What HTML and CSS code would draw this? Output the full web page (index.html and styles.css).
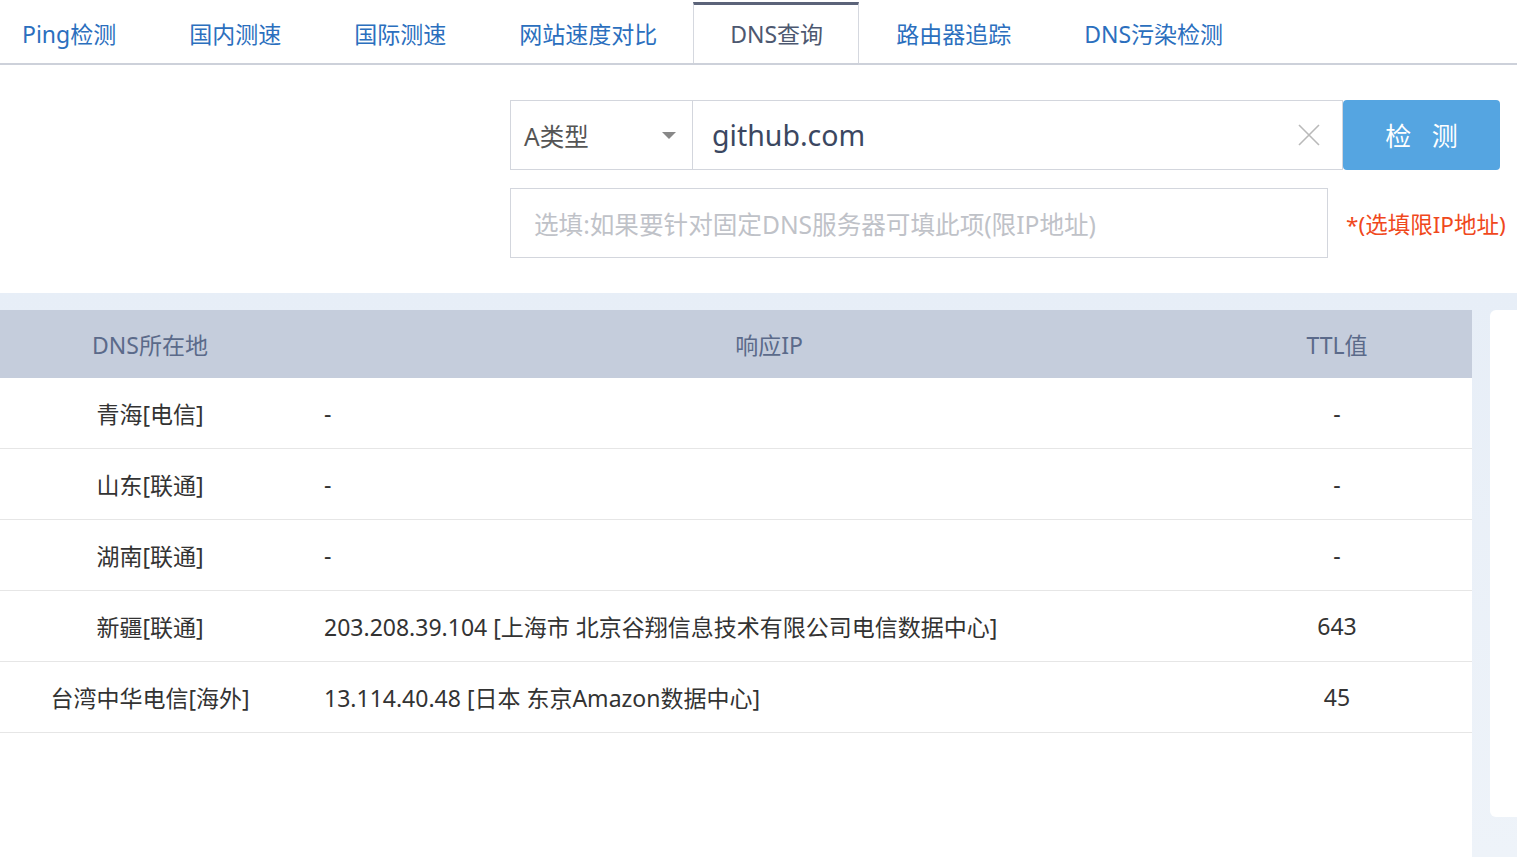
FILE: index.html
```html
<!DOCTYPE html>
<html lang="zh-CN">
<head>
<meta charset="utf-8">
<title>DNS查询</title>
<link rel="stylesheet" href="styles.css">
</head>
<body>
<nav class="tabs">
  <a class="tab first">Ping检测</a>
  <a class="tab">国内测速</a>
  <a class="tab">国际测速</a>
  <a class="tab">网站速度对比</a>
  <a class="tab active">DNS查询</a>
  <a class="tab">路由器追踪</a>
  <a class="tab">DNS污染检测</a>
</nav>
<section class="form">
  <div class="row">
    <div class="select">
      <span>A类型</span>
      <span class="caret"></span>
    </div>
    <div class="host">
      <span class="host-text">github.com</span>
      <svg class="clear" width="24" height="24" viewBox="0 0 24 24"><path d="M2 2 L22 22 M22 2 L2 22" stroke="#b9b9b9" stroke-width="1.6" fill="none"/></svg>
    </div>
    <button class="btn">检&nbsp;&nbsp;&nbsp;测</button>
  </div>
  <div class="row row2">
    <div class="dns-input">选填:如果要针对固定DNS服务器可填此项(限IP地址)</div>
    <span class="hint">*(选填限IP地址)</span>
  </div>
</section>
<section class="content">
  <div class="panel">
    <div class="thead">
      <div class="c1">DNS所在地</div>
      <div class="c2 h2">响应IP</div>
      <div class="c3">TTL值</div>
    </div>
    <div class="tr"><div class="c1">青海[电信]</div><div class="c2">-</div><div class="c3">-</div></div>
    <div class="tr"><div class="c1">山东[联通]</div><div class="c2">-</div><div class="c3">-</div></div>
    <div class="tr"><div class="c1">湖南[联通]</div><div class="c2">-</div><div class="c3">-</div></div>
    <div class="tr"><div class="c1">新疆[联通]</div><div class="c2">203.208.39.104 [上海市 北京谷翔信息技术有限公司电信数据中心]</div><div class="c3">643</div></div>
    <div class="tr"><div class="c1">台湾中华电信[海外]</div><div class="c2">13.114.40.48 [日本 东京Amazon数据中心]</div><div class="c3">45</div></div>
  </div>
  <div class="side"></div>
</section>
</body>
</html>
```

FILE: styles.css
```css
* { box-sizing: border-box; }
html, body { margin: 0; padding: 0; background: #fff; }
body {
  font-family: "Noto Sans", "Noto Sans CJK SC", sans-serif;
  color: #333;
  width: 1517px;
  height: 857px;
  overflow: hidden;
}
.tabs {
  display: flex;
  height: 65px;
  border-bottom: 2px solid #cdd1da;
}
.tab {
  display: flex;
  align-items: center;
  padding: 0 35px 2px 36px;
  font-size: 23px;
  color: #2b6fbe;
  border-top: 3px solid transparent;
  border-left: 1px solid transparent;
  border-right: 1px solid transparent;
  margin-top: 2px;
  height: 61px;
}
.tab.first { padding-left: 21px; }
.tab.active {
  color: #4d5870;
  border-top-color: #5b6379;
  border-left-color: #d5d8df;
  border-right-color: #d5d8df;
}
.form {
  height: 228px;
  padding: 35px 0 0 510px;
}
.row { display: flex; height: 70px; }
.row2 { margin-top: 18px; align-items: center; }
.select {
  width: 183px;
  height: 70px;
  border: 1px solid #d3d6dd;
  display: flex;
  align-items: center;
  justify-content: space-between;
  padding: 0 16px 0 13px;
  font-size: 24.5px;
  color: #555;
}
.caret {
  width: 0; height: 0;
  border-left: 7px solid transparent;
  border-right: 7px solid transparent;
  border-top: 7px solid #888;
}
.host {
  width: 650px;
  height: 70px;
  border: 1px solid #d3d6dd;
  border-left: none;
  display: flex;
  align-items: center;
  justify-content: space-between;
  padding: 0 21px 0 19px;
}
.host-text { font-size: 28.5px; color: #3b4761; }
.clear { display: block; }
.btn {
  width: 157px;
  height: 70px;
  border: none;
  border-radius: 4px;
  background: #55a5e1;
  color: #fff;
  font-family: inherit;
  font-size: 26px;
  padding: 0;
}
.dns-input {
  width: 818px;
  height: 70px;
  border: 1px solid #d3d6dd;
  display: flex;
  align-items: center;
  padding-left: 23px;
  font-size: 24.6px;
  color: #bfc2c8;
}
.hint {
  margin-left: 18px;
  font-size: 22.5px;
  color: #f0481c;
  white-space: nowrap;
}
.content {
  display: flex;
  background: linear-gradient(#e7eef7, #eef3f9);
  padding-top: 17px;
  height: 564px;
  gap: 18px;
}
.panel {
  width: 1472px;
  background: #fff;
  flex: none;
}
.side {
  flex: 1;
  background: #fff;
  height: 507px;
  border-radius: 6px 0 0 6px;
}
.thead, .tr {
  display: grid;
  grid-template-columns: 300px 902px 270px;
  align-items: center;
}
.thead {
  height: 68px;
  background: #c5cddc;
  color: #5b6a8a;
  font-size: 23px;
}
.tr {
  height: 71px;
  border-bottom: 1px solid #e6e6e6;
  font-size: 23px;
  color: #333;
}
.c1, .c3 { text-align: center; }
.c2 { padding-left: 24px; }
.thead .h2 { text-align: center; padding-left: 36px; }
```
